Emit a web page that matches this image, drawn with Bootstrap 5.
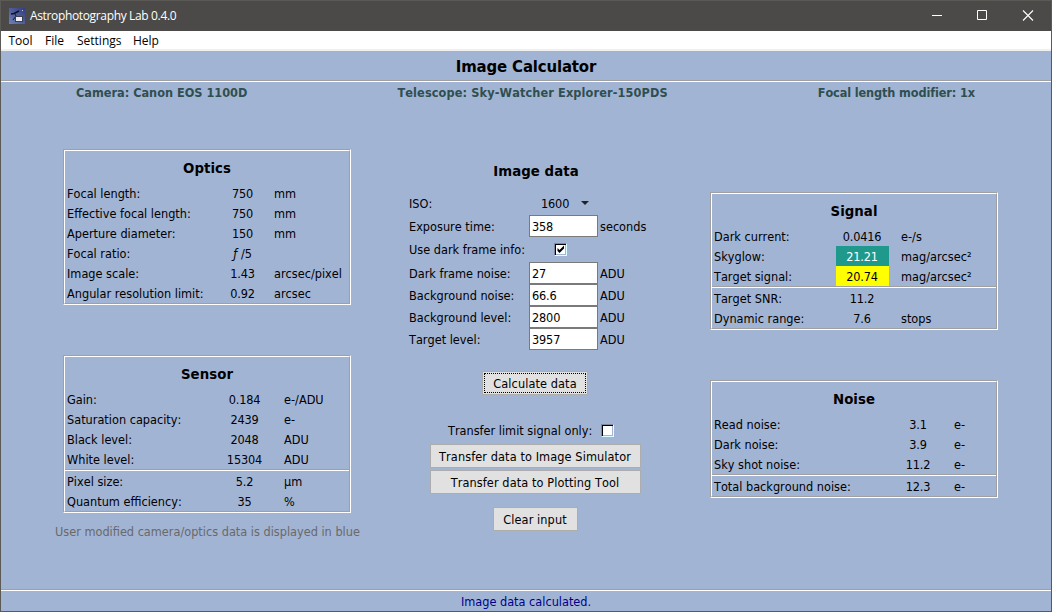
<!DOCTYPE html>
<html lang="en">
<head>
<meta charset="utf-8">
<title>Astrophotography Lab 0.4.0</title>
<link rel="stylesheet" href="https://cdn.jsdelivr.net/npm/bootstrap@5.3.0/dist/css/bootstrap.min.css">
<script src="https://cdn.jsdelivr.net/npm/bootstrap@5.3.0/dist/js/bootstrap.bundle.min.js"></script>
<style>
  html, body { height: 100%; }
  body { font: 12.6px/20px Tahoma, "DejaVu Sans Condensed", "DejaVu Sans", sans-serif; font-stretch: condensed; font-kerning: none; letter-spacing: 0; color: #000; background: #a2b4d4; overflow: hidden; }
  .app-window { height: 612px; border: 1px solid #5b5a57; }
  .titlebar { height: 30px; background: #4c4a48; color: #fff; font: 12px/30px "Segoe UI", "Open Sans", sans-serif; letter-spacing: -.35px; padding-left: 8px; }
  .titlebar .btn-win { width: 45px; }
  .titlebar .controls { margin-right: 1px; }
  .caption-text { margin-left: 5px; }
  .menubar { height: 20px; background: #fff; border-bottom: 2px solid #f0f0f0; font: 12px/19px "Segoe UI", "Open Sans", sans-serif; padding-left: 7.5px; letter-spacing: 0; }
  .menubar a { color: #000; text-decoration: none; }
  .heading { height: 29px; line-height: 31px; font-size: 16.6px; letter-spacing: -.15px; }
  .heading, .subheading, .equip { font-weight: 700; margin: 0; text-align: center; }
  .rule { height: 2px; border-top: 1px solid #a0a0a0; background: #fff; flex: none; }
  .equip { height: 21px; padding: 0 76px 0 75px; color: #2f4f4f; line-height: 21px; }
  .equip .scope { letter-spacing: .12px; }
  .equip .modifier { letter-spacing: -.12px; }
  .workspace { display: grid; grid-template-columns: 412px 246px 1fr; }
  .panel { width: 288px; border: 1px solid #a0a0a0; border-right-color: #fff; border-bottom-color: #fff; }
  .panel-in { border: 1px solid #fff; border-right-color: #a0a0a0; border-bottom-color: #a0a0a0; }
  .subheading { font-size: 14.8px; letter-spacing: .05px; line-height: 34px; height: 32px; }
  .form-title { line-height: 28px; height: 35px; }
  .datum { display: grid; grid-template-columns: var(--lab) 53px 1fr; height: 20px; line-height: 21px; white-space: nowrap; }
  .datum > :first-child { padding-left: 2px; }
  .datum > :nth-child(2) { text-align: center; letter-spacing: -.15px; overflow: hidden; }
  .datum > :nth-child(3) { padding-left: var(--gap); }
  .optics { --lab: 151px; --gap: 5px; }
  .sensor { --lab: 153px; --gap: 13px; }
  .signal { --lab: 124px; --gap: 12px; }
  .noise { --lab: 180px; --gap: 9px; }
  .signal .datum > :nth-child(2), .noise .datum > :nth-child(2) { padding-right: 1px; }
  .teal, .yellow { height: 20px; }
  .teal { background: #20998d; color: #fff; }
  .yellow { background: #ff0; }
  .entry { display: grid; grid-template-columns: 120px 69px 1fr; height: 22px; line-height: 21px; align-items: center; white-space: nowrap; }
  .entry input { height: 22px; width: 69px; border: 1px solid #7a7a7a; padding: 0 2px; background: #fff; font: inherit; letter-spacing: -.15px; color: #000; border-radius: 0; }
  .entry .unit { padding-left: 2px; }
  .tick { width: 13px; height: 13px; background: #fff; border: 1px solid #8088a0; border-right-color: #dff; border-bottom-color: #dff; box-shadow: inset 1px 1px #000, inset -1px -1px #a2b4d4; display: block; }
  .btn-tk { height: 24px; border: 1px solid #adadad; background: #e1e1e1; font: inherit; letter-spacing: .1px; color: #000; padding: 1px 0 0; border-radius: 0; margin-right: 2px; }
  .focus-dots { outline: 1px dotted #000; outline-offset: -3px; }
  .hint { color: #696969; width: 304px; white-space: nowrap; }
  .status { color: #00008b; height: 20px; line-height: 21px; }
</style>
</head>
<body>
<div class="app-window d-flex flex-column">
  <header class="titlebar d-flex align-items-center flex-shrink-0">
    <svg width="16" height="16" viewBox="0 0 16 16">
      <defs><linearGradient id="sky" x1="0" y1="1" x2="1" y2="0"><stop offset="0" stop-color="#7080b4"/><stop offset="1" stop-color="#303c84"/></linearGradient></defs>
      <path fill="url(#sky)" d="M0 0h16v16H0z"/>
      <path d="M2 6l3-.500 5-2.500" stroke="#10131f" stroke-width="1.600" fill="none"/>
      <path d="M6 6l1 2-3 4" stroke="#161a2c" fill="none"/>
      <path fill="#3a3f55" d="M6 8h8v6H6z"/><path fill="#eee" d="M7 9h6v4H7z"/><path fill="#c8ccd8" d="M13 2h1v1h-1z"/>
    </svg>
    <span class="caption-text me-auto">Astrophotography Lab 0.4.0</span>
    <div class="controls d-flex">
    <svg class="btn-win" height="30" viewBox="0 0 45 30"><path d="M17 14.500h10" stroke="#fff"/></svg>
    <svg class="btn-win" height="30" viewBox="0 0 45 30"><path d="M17.500 9.500h9v9h-9z" stroke="#fff" fill="none"/></svg>
    <svg class="btn-win" height="30" viewBox="0 0 45 30"><path d="M18 9.500l10 10M28 9.500l-10 10" stroke="#fff" stroke-width="1.100"/></svg>
    </div>
  </header>
  <nav class="menubar d-flex flex-shrink-0">
    <a href="#" style="width:36.500px">Tool</a><a href="#" style="width:32px">File</a><a href="#" style="width:56px">Settings</a><a href="#">Help</a>
  </nav>
  <h1 class="heading">Image Calculator</h1>
  <div class="rule"></div>
  <div class="equip d-flex justify-content-between"><span>Camera: Canon EOS 1100D</span><span class="scope">Telescope: Sky-Watcher Explorer-150PDS</span><span class="modifier">Focal length modifier: 1x</span></div>
  <main class="workspace flex-grow-1">
    <div class="d-flex flex-column align-items-center" style="padding-top:46px">
      <section class="panel optics"><div class="panel-in">
        <h2 class="subheading">Optics</h2>
        <div class="datum"><span>Focal length:</span><span>750</span><span>mm</span></div>
        <div class="datum"><span>Effective focal length:</span><span>750</span><span>mm</span></div>
        <div class="datum"><span>Aperture diameter:</span><span>150</span><span>mm</span></div>
        <div class="datum"><span>Focal ratio:</span><span><i class="pe-1">ƒ</i>/5</span></div>
        <div class="datum"><span>Image scale:</span><span>1.43</span><span>arcsec/pixel</span></div>
        <div class="datum"><span>Angular resolution limit:</span><span>0.92</span><span>arcsec</span></div>
      </div></section>
      <section class="panel sensor" style="margin-top:50px"><div class="panel-in">
        <h2 class="subheading">Sensor</h2>
        <div class="datum"><span>Gain:</span><span>0.184</span><span>e-/ADU</span></div>
        <div class="datum"><span>Saturation capacity:</span><span>2439</span><span>e-</span></div>
        <div class="datum"><span>Black level:</span><span>2048</span><span>ADU</span></div>
        <div class="datum"><span>White level:</span><span>15304</span><span>ADU</span></div>
        <div class="rule"></div>
        <div class="datum"><span>Pixel size:</span><span>5.2</span><span>µm</span></div>
        <div class="datum"><span>Quantum efficiency:</span><span>35</span><span>%</span></div>
      </div></section>
      <div class="hint" style="margin-top:9px">User modified camera/optics data is displayed in blue</div>
    </div>
    <div class="d-flex flex-column align-items-center" style="padding-top:54px">
      <h2 class="subheading form-title">Image data</h2>
      <form class="w-100">
        <div style="margin-left:-4px">
        <div class="entry" style="height:23px"><span>ISO:</span><span class="d-flex align-items-center" style="padding-left:12px;letter-spacing:-.15px">1600<svg class="ms-2" style="margin-top:-1px" width="16" height="6" viewBox="0 0 16 6"><path d="M4 1h8l-4 4z" fill="#222"/></svg></span></div>
        <div class="entry"><span>Exposure time:</span><input value="358"><span class="unit">seconds</span></div>
        <div class="entry" style="height:25px"><span>Use dark frame info:</span><span class="tick" style="margin-left:25px"><svg class="d-block" width="11" height="11" viewBox="0 0 11 11"><path d="M2.500 4v3l2 2L9 4.500v-3L4.500 6z" fill="#000"/></svg></span></div>
        <div class="entry"><span>Dark frame noise:</span><input value="27"><span class="unit">ADU</span></div>
        <div class="entry"><span>Background noise:</span><input value="66.6"><span class="unit">ADU</span></div>
        <div class="entry"><span>Background level:</span><input value="2800"><span class="unit">ADU</span></div>
        <div class="entry"><span>Target level:</span><input value="3957"><span class="unit">ADU</span></div>
        </div>
      </form>
      <button class="btn-tk focus-dots" style="width:106px;margin-top:21px">Calculate data</button>
      <div class="d-flex align-items-center" style="height:20px;line-height:21px;margin:25px 10px 4px 0"><span style="width:153px">Transfer limit signal only:</span><span class="tick"></span></div>
      <button class="btn-tk" style="width:211px">Transfer data to Image Simulator</button>
      <button class="btn-tk" style="width:211px;margin-top:2px">Transfer data to Plotting Tool</button>
      <button class="btn-tk" style="width:85px;margin-top:13px">Clear input</button>
    </div>
    <div class="d-flex flex-column align-items-center" style="padding:89px 2px 0 0">
      <section class="panel signal"><div class="panel-in">
        <h2 class="subheading">Signal</h2>
        <div class="datum"><span>Dark current:</span><span>0.0416</span><span>e-/s</span></div>
        <div class="datum"><span>Skyglow:</span><span class="teal">21.21</span><span>mag/arcsec²</span></div>
        <div class="datum"><span>Target signal:</span><span class="yellow">20.74</span><span>mag/arcsec²</span></div>
        <div class="rule"></div>
        <div class="datum"><span>Target SNR:</span><span>11.2</span></div>
        <div class="datum"><span>Dynamic range:</span><span>7.6</span><span>stops</span></div>
      </div></section>
      <section class="panel noise" style="margin-top:50px"><div class="panel-in">
        <h2 class="subheading">Noise</h2>
        <div class="datum"><span>Read noise:</span><span>3.1</span><span>e-</span></div>
        <div class="datum"><span>Dark noise:</span><span>3.9</span><span>e-</span></div>
        <div class="datum"><span>Sky shot noise:</span><span>11.2</span><span>e-</span></div>
        <div class="rule"></div>
        <div class="datum"><span>Total background noise:</span><span>12.3</span><span>e-</span></div>
      </div></section>
    </div>
  </main>
  <div class="rule"></div>
  <footer class="status text-center">Image data calculated.</footer>
</div>
</body>
</html>
